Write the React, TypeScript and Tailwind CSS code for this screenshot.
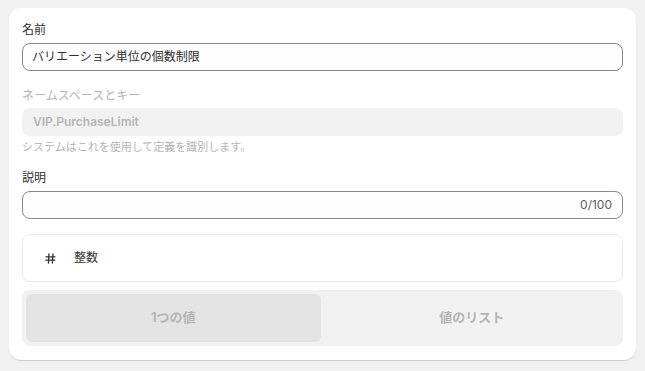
const font = "font-['Inter','Noto_Sans_CJK_JP',sans-serif]";

function Label({ children, muted }: { children: React.ReactNode; muted?: boolean }) {
  return (
    <div className={`text-[12px] leading-4 ${muted ? 'text-[#b5b5b5]' : 'text-[#303030]'}`}>{children}</div>
  );
}

function HashIcon() {
  return (
    <svg width="11" height="11" viewBox="0 0 11 11" fill="none" stroke="#303030" strokeWidth="1.3" strokeLinecap="round">
      <path d="M4 1 L3.4 10 M8 1 L7.4 10 M1 3.8 H10 M0.8 7.2 H9.8" />
    </svg>
  );
}

export default function App() {
  return (
    <div className={`min-h-[371px] bg-[#f1f1f1] px-[9px] pt-2 ${font}`}>
      <div className="flex flex-col rounded-xl bg-white px-[13px] pb-[14px] pt-[14px] shadow-[0_1px_1px_rgba(0,0,0,0.15)]">
        <Label>名前</Label>
        <div className="mt-[5px] flex h-7 items-center rounded-lg border border-[#8a8a8a] bg-[#fdfdfd] px-[9px] text-[12px] text-[#303030]">
          バリエーション単位の個数制限
        </div>

        <div className="mt-[17px]">
          <Label muted>ネームスペースとキー</Label>
        </div>
        <div className="mt-1 flex h-7 items-center rounded-lg bg-[#f1f1f1] px-[11px] text-[12px] font-semibold text-[#b5b5b5]">
          VIP.PurchaseLimit
        </div>
        <div className="mt-1 text-[11px] leading-[14px] text-[#b5b5b5]">システムはこれを使用して定義を識別します。</div>

        <div className="mt-4">
          <Label>説明</Label>
        </div>
        <div className="mt-[5px] flex h-7 items-center justify-end rounded-lg border border-[#8a8a8a] bg-[#fdfdfd] px-[10px] text-[12px] text-[#616161]">
          0/100
        </div>

        <div className="mt-[15px] flex h-12 items-center gap-[18px] rounded-lg border border-[#ebebeb] pl-[22px] text-[12px] text-[#303030]">
          <HashIcon />
          <span>整数</span>
        </div>

        <div className="mt-2 grid h-14 grid-cols-2 gap-1 rounded-lg bg-[#f1f1f1] p-1 text-[13px] font-bold text-[#b5b5b5]">
          <div className="flex items-center justify-center rounded-md bg-[#e3e3e3]">1つの値</div>
          <div className="flex items-center justify-center rounded-md">値のリスト</div>
        </div>
      </div>
    </div>
  );
}
